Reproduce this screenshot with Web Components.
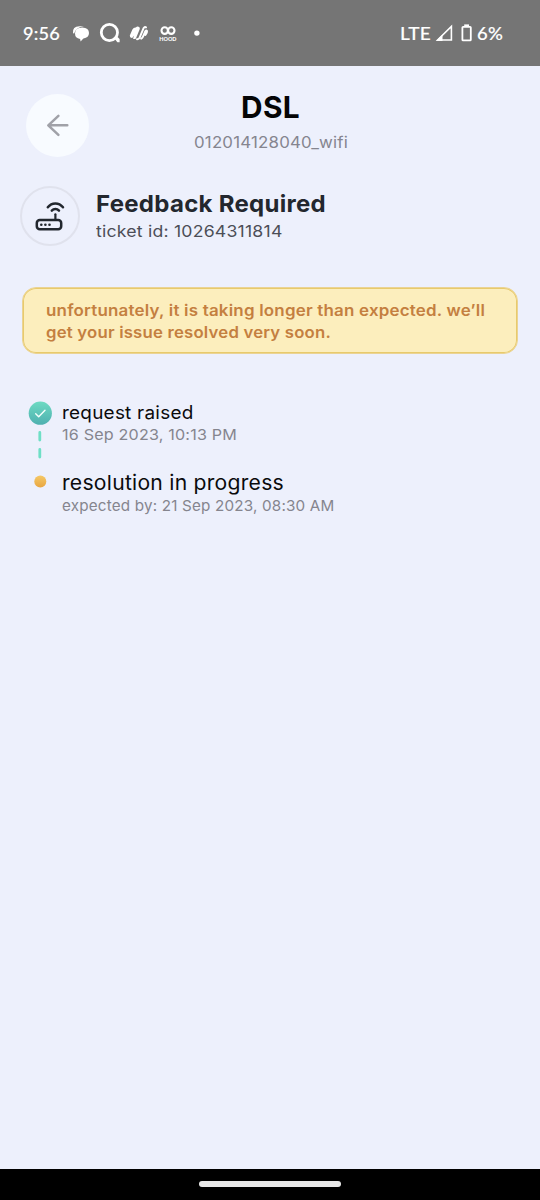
<!DOCTYPE html>
<html lang="en">
<head>
<meta charset="utf-8">
<title>DSL</title>
<style>
html,body{margin:0;height:100%;background:#edf0fc}
body{font-family:Inter,"Noto Sans","Liberation Sans",sans-serif;overflow:hidden}
</style>
</head>
<body>
<ticket-screen></ticket-screen>
<script>
const define = (name, html, Base = HTMLElement) => {
  const t = document.createElement('template');
  t.innerHTML = html;
  customElements.define(name, class extends Base {
    constructor() {
      super();
      this.attachShadow({ mode: 'open' }).append(t.content.cloneNode(true));
    }
  });
};

// One line of text, widened so that it fills the given width.
class TextLine extends HTMLElement {
  constructor() {
    super();
    this.attachShadow({ mode: 'open' }).innerHTML =
      '<style>:host{display:block;white-space:nowrap}span{display:inline-block;transform-origin:0 50%}</style><span><slot></slot></span>';
  }
  connectedCallback() {
    const s = this.style, a = n => this.getAttribute(n);
    s.fontSize = a('size') + 'px';
    s.lineHeight = s.height = a('line') + 'px';
    s.width = a('width') + 'px';
    s.letterSpacing = '.012em';
    const span = this.shadowRoot.querySelector('span');
    const ratio = a('width') / span.getBoundingClientRect().width;
    span.style.transform = `scaleX(${ratio.toFixed(4)})`;
  }
}

define('status-bar', `
<style>
:host{display:flex;align-items:center;justify-content:space-between;height:66px;box-sizing:border-box;padding:0 37px 0 23px;background:#757575;color:#fff;font-family:Lato,"Noto Sans",sans-serif;font-weight:500}
.g{display:flex;align-items:center}
text-line{-webkit-text-stroke:.15px #fff}
svg{display:block}
</style>
<div class="g">
<text-line size="17.8" line="24" width="37">9:56</text-line>
<svg width="150" height="30" viewBox="60 18 150 30" fill="#fff">
<path d="M73 33.2Q72.2 26.2 79.5 26.2H84Q76 26.9 74.2 33.6Z"/>
<path d="M75 33.6Q75 27.4 82.2 27.4Q89 27.5 89 33Q89 37.6 83.4 38.6L80.6 41.6L80.1 38.9Q75 38.3 75 33.6Z"/>
<circle cx="109.4" cy="32.5" r="8.1" fill="none" stroke="#fff" stroke-width="2.8"/>
<path d="M113.6 37.6L117 36.4L119.6 39V42.2H117.4Z"/>
<path d="M129.8 35.6L132.4 29.4Q133.6 27.2 135.8 27.4Q137.6 25.6 139.4 27.2Q140.2 28.2 139.6 29.6L136 38.2Q134.6 39.8 133 38.6L134.2 35.4L132.2 38Q129.6 38.2 129.8 35.6Z"/>
<path d="M137 39.2Q138.8 39.4 139.7 37.4L143.4 28.6Q144.6 26.4 146 27.4M141.2 38.6Q142.4 38 143 36.6L145.2 31.4Q146.2 30 147 31Q147.2 32.6 145.4 35" fill="none" stroke="#fff" stroke-width="2" stroke-linecap="round"/>
<g fill="none" stroke="#fff" stroke-width="2.1"><ellipse cx="164.7" cy="30.6" rx="3.2" ry="3.3"/><ellipse cx="171.3" cy="30.6" rx="3.2" ry="3.3"/></g>
<text x="159.3" y="40.5" font-family="Lato" font-weight="900" font-size="5.8" textLength="17.2" lengthAdjust="spacingAndGlyphs">HOOD</text>
<circle cx="196.9" cy="33.1" r="2.7"/>
</svg>
</div>
<div class="g">
<text-line size="17.8" line="24" width="31">LTE</text-line>
<svg width="46" height="30" viewBox="431 18 46 30" fill="none" stroke="#fff">
<path stroke-width="1.6" d="M437.6 40L451.4 26.4V40Z"/><path fill="#fff" stroke="none" d="M436 41L442.5 34.5V41Z"/>
<rect x="462.4" y="26.8" width="8.4" height="13.6" rx=".7" stroke-width="1.8"/><path fill="#fff" stroke="none" d="M464.2 24.4H469V27H464.2Z"/>
</svg>
<text-line size="17.8" line="24" width="26">6%</text-line>
</div>`);

define('back-button', `
<style>:host{display:block;width:63px;height:63px;border-radius:50%;background:#f8fbff}svg{display:block}</style>
<svg width="63" height="63" viewBox="26 93.5 63 63" fill="none" stroke="#a0a1a8" stroke-width="2.5" stroke-linecap="round" stroke-linejoin="round"><path d="M67.3 124.8H48.6M58.4 115.4L48.3 124.8L58.4 134.4"/></svg>`);

define('page-header', `
<style>
:host{display:grid;grid-template-columns:90px 1fr 90px;height:119px;box-sizing:border-box;padding-top:22px}
back-button{margin:5.5px 0 0 26px}
.t{display:flex;flex-direction:column;align-items:center;gap:6px;padding:1px 0 0 1px}
::slotted([slot=title]){font-weight:650;color:#050506}
::slotted([slot=sub]){color:#85858f}
</style>
<back-button></back-button><div class="t"><slot name="title"></slot><slot name="sub"></slot></div>`);

define('ticket-summary', `
<style>
:host{display:flex;height:102px;padding-left:20px}
.i{width:56px;height:56px;border:2px solid #e0e2ed;border-radius:50%;margin:.5px 16px 0 0}
svg{display:block}
.t{padding-top:4px;display:flex;flex-direction:column;gap:1.5px}
::slotted([slot=title]){font-weight:650;color:#23272e}
::slotted([slot=sub]){color:#4c4e57}
</style>
<div class="i"><svg width="56" height="56" viewBox="22 187.5 56 56" fill="none" stroke="#22272e" stroke-width="2.5" stroke-linecap="round">
<rect x="36.8" y="219.4" width="24.4" height="9.3" rx="3"/><path stroke-width="2.2" d="M55.4 219V213.8"/>
<path d="M47.8 206.8C51.8 201.6 58.9 201.6 63 206.8"/><path d="M51.8 210.2C53.8 208 57 208 59 210.2"/>
<g fill="#22272e" stroke="none"><circle cx="41.3" cy="224.2" r="1.3"/><circle cx="45.4" cy="224.2" r="1.3"/><circle cx="49.5" cy="224.2" r="1.3"/></g></svg></div>
<div class="t"><slot name="title"></slot><slot name="sub"></slot></div>`);

define('notice-banner', `
<style>:host{display:block;box-sizing:border-box;margin:0 22px;height:67px;padding:12px 23px 0;border:1px solid #ead394;box-shadow:inset 0 0 0 1px #e8ca6c;border-radius:14px;background:#fceebd;color:#c47f40;font-weight:600}</style>
<slot></slot>`);

define('progress-step', `
<style>
:host{display:flex}
.r{width:34px;padding-left:28px;flex:none}
::slotted(svg){display:block}
.t{display:flex;flex-direction:column}
::slotted([slot=title]){color:#0a0a0c}
::slotted([slot=sub]){color:#85858e}
</style>
<div class="r"><slot name="mark"></slot></div><div class="t"><slot name="title"></slot><slot name="sub"></slot></div>`);

define('nav-bar', `
<style>:host{display:flex;justify-content:center;height:31.5px;background:#000}div{width:142px;height:5.6px;border-radius:3px;background:#e8e8e8;margin-top:12.6px}</style><div></div>`);

define('ticket-screen', `
<style>
:host{display:flex;flex-direction:column;height:1200px;width:540px;background:#edf0fc}
main{flex:1}
.steps{padding-top:47px}
</style>
<status-bar></status-bar>
<main>
<page-header>
<text-line slot="title" size="30.3" line="36" width="59">DSL</text-line>
<text-line slot="sub" size="15.5" line="24" width="154">012014128040_wifi</text-line>
</page-header>
<ticket-summary>
<text-line slot="title" size="23.5" line="30" width="230">Feedback Required</text-line>
<text-line slot="sub" size="16" line="20" width="186.5">ticket id: 10264311814</text-line>
</ticket-summary>
<notice-banner>
<text-line size="15.7" line="21.5" width="439">unfortunately, it is taking longer than expected. we’ll</text-line>
<text-line size="15.7" line="21.5" width="285">get your issue resolved very soon.</text-line>
</notice-banner>
<div class="steps">
<progress-step>
<svg slot="mark" width="25" height="68" viewBox="28 401 25 68"><defs><linearGradient id="g" x2="0" y2="1"><stop stop-color="#6edac2"/><stop offset="1" stop-color="#4eb0b0"/></linearGradient></defs><circle cx="40.3" cy="413.2" r="11.6" fill="url(#g)"/><path d="M35.7 413.8L38.7 416.8L45 410.2" fill="none" stroke="#f4fffb" stroke-width="1.4" stroke-linecap="round" stroke-linejoin="round"/><path d="M39.8 432.4V440M39.8 449.4V457" stroke="#6fdfc6" stroke-width="2.8" stroke-linecap="round"/></svg>
<text-line slot="title" size="18.2" line="23" width="131.5">request raised</text-line>
<text-line slot="sub" size="15" line="22" width="175">16 Sep 2023, 10:13 PM</text-line>
</progress-step>
<progress-step>
<svg slot="mark" width="25" height="26" viewBox="28 469 25 26"><defs><linearGradient id="o" x2="0" y2="1"><stop stop-color="#f5c866"/><stop offset="1" stop-color="#e8a540"/></linearGradient></defs><circle cx="40.3" cy="481.6" r="6" fill="url(#o)"/></svg>
<text-line slot="title" size="20.4" line="27" width="222">resolution in progress</text-line>
<text-line slot="sub" size="15" line="20" width="272.5">expected by: 21 Sep 2023, 08:30 AM</text-line>
</progress-step>
</div>
</main>
<nav-bar></nav-bar>`);

customElements.define('text-line', TextLine);
</script>
</body>
</html>
